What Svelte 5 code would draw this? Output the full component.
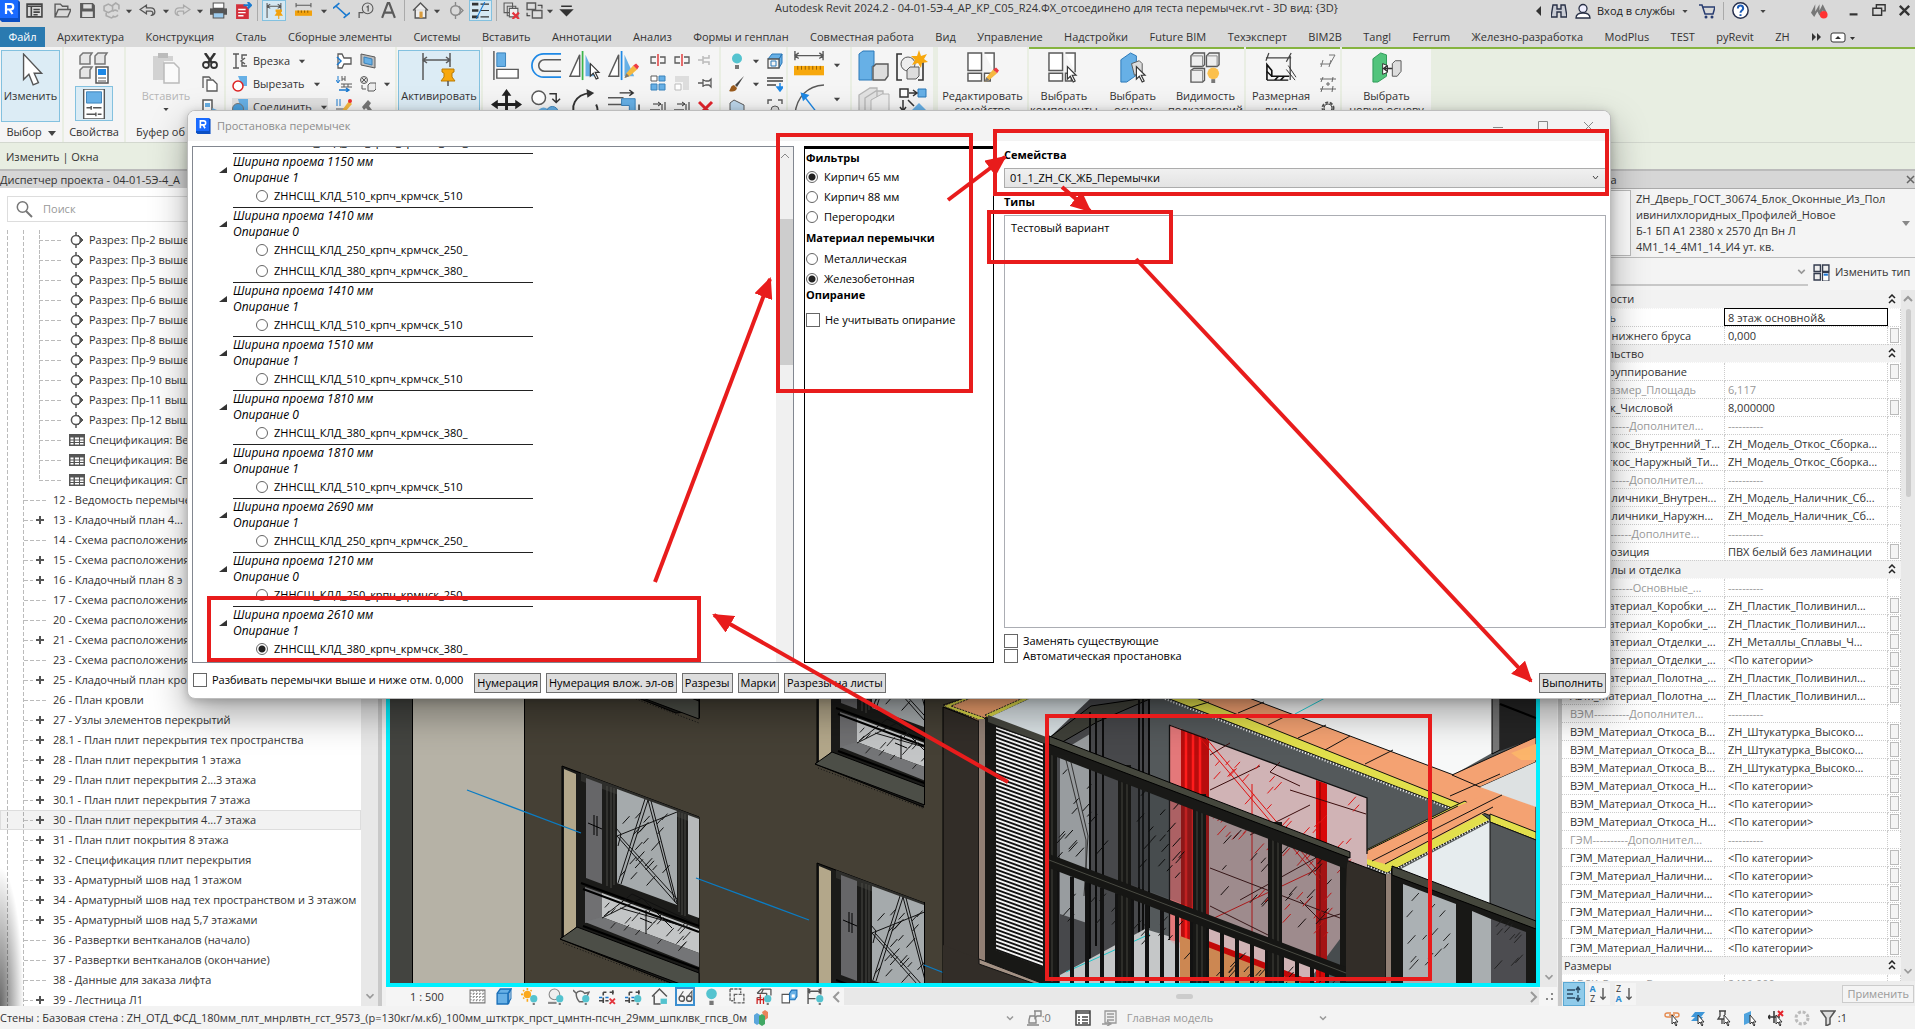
<script>
  const G = '#5a5a5a';
  const B = '#67b0e6';
  const bulb = '<circle cx="12" cy="10" r="3.4" fill="#54c3cf"/><path d="M11 14h2v2h-2z" fill="#777"/>';
  const cursor = (x, y) => `<path d="M${x} ${y}v13l3-3 3 6 2-1-3-6h4z" fill="#fff" stroke="#333" stroke-width="1.2"/>`;
  const pencil = (x, y) => `<g transform="translate(${x} ${y})"><path d="M0 14l2-5 7-8 4 4-8 7z" fill="#f5b840"/><path d="M9 1l4 4 2-3-3-3z" fill="#ee3a43"/><path d="M0 14l2-5 3 3z" fill="#777"/></g>`;
  const icons = {
    caret: `<path d="M4.500 6.500h7l-3.500 4z" fill="#444"/>`,
    caretGray: `<path d="M4 6l4 4 4-4" fill="none" stroke="#999" stroke-width="2"/>`,
    list: `<path d="M1 2h14v12H1z" fill="none" stroke="#444" stroke-width="1.5"/><path d="M1 4h14M5 4v10M7 7h6M7 9.500h6M7 12h4" stroke="#444" stroke-width="1.5"/>`,
    folder: `<path d="M1 14V2h5l2 2h5v3M1 14l3-7h12l-3 7z" fill="none" stroke="${G}" stroke-width="1.3"/>`,
    save: `<path d="M1 1h12l2 2v12H1z" fill="${G}"/><path d="M4 2h8v4H4zM3 9h10v5H3z" fill="#ddd"/>`,
    sync: `<path d="M1 4l4-2 4 2v4l-4 2-4-2zM8 4l4-3 3 2v4M3 10v3l5 2 2-1" fill="none" stroke="#aaa" stroke-width="1.5"/><path d="M9 9a3 3 0 015 0M14 12a3 3 0 01-5 1" fill="none" stroke="#aaa" stroke-width="1.500"/>`,
    undo: `<path d="M1 7l6-4v2.500h4c5 0 5 7 1 7 2-2 1-4-1-4H7V11z" fill="none" stroke="#555" stroke-width="1.2"/>`,
    redo: `<path d="M15 7L9 3v2.500H5c-5 0-5 7-1 7-2-2-1-4 1-4h4V11z" fill="none" stroke="#aaa" stroke-width="1.2"/>`,
    print: `<path d="M3 1h10v5H3z" fill="#fff" stroke="#555"/><path d="M0 6h16v6H0z" fill="#555"/><path d="M3 10h10v5H3z" fill="#9ccbee" stroke="#555"/>`,
    pdf: `<path d="M1 2h8l4 4v10H1z" fill="#d3303b"/><path d="M3 7h7M3 10h7M3 13h5" stroke="#fff" stroke-width="1.300"/><path d="M8 3h7M12 0l3 3-3 3" stroke="#1a7ad0" stroke-width="2" fill="none"/>`,
    dimpin: `<path d="M1 1v14M14 1v8M1 4h13M4 2L1 4l3 2M11 2l3 2-3 2" fill="none" stroke="${G}"/><path d="M9 7h6v2l-1 1 2 3H8l2-3-1-1zM11.500 13h1v3h-1z" fill="#f2a20d"/>`,
    measure: `<path d="M1 3h14M1 1v4M15 1v4" stroke="${G}"/><path d="M0 8h16v5H0z" fill="#f2a20d"/><path d="M3 8v2M6 8v2M9 8v2M12 8v2" stroke="#945f00"/>`,
    dim: `<path d="M3 4l10 9M0 6l6-5M10 15l6-5" stroke="#1a7ad0" stroke-width="1.500"/>`,
    tag: `<circle cx="10" cy="6" r="5" fill="none" stroke="${G}"/><path d="M6 10H2v5M9 5l1.500-1V9" fill="none" stroke="${G}" stroke-width="1.200"/>`,
    letter: `<path d="M2 15L7.300 1h1.400L14 15M4 10h8" fill="none" stroke="${G}" stroke-width="2"/>`,
    home: `<path d="M1 8l7-7 7 7M3 7v8h10V7" fill="#eee" stroke="#555" stroke-width="1.300"/><path d="M7 9h3v6H7z" fill="#d89b3c"/>`,
    section: `<circle cx="8" cy="8" r="4.500" fill="none" stroke="#888" stroke-width="1.400"/><path d="M8 0v3M8 13v3M11 4l4 4-4 4" fill="none" stroke="#888" stroke-width="1.300"/>`,
    thin: `<path d="M0 2h6M0 8h6M0 14h6" stroke="#333" stroke-width="2.500"/><path d="M8 2h8M8 8h8M8 14h8" stroke="#333"/><path d="M12 0L4 16" stroke="#1a7ad0"/>`,
    closewin: `<path d="M1 1h8v9H1zM4 4h8v9H4z" fill="#ddd" stroke="${G}"/><path d="M6 6h8v8H6z" fill="#eee" stroke="${G}"/><path d="M9 10l6 6M15 10l-6 6" stroke="#e3343c" stroke-width="2"/>`,
    switchwin: `<path d="M1 1h8v6H1zM6 8h9v7H6z" fill="#ddd" stroke="${G}" stroke-width="1.300"/><path d="M11 3h4v3M4 13H1v-3" stroke="#333" fill="none"/>`,
    more: `<path d="M3 4h10M3 7.500h10l-5 5z" stroke="#333" fill="#333" stroke-width="1.500"/>`,
    binoc: `<path d="M2 2h4v4h4V2h4l2 12h-6V9H6v5H0z" fill="#c9ccd4" stroke="#283046" stroke-width="1.400"/>`,
    person: `<circle cx="8" cy="5.500" r="4" fill="#eef" stroke="#283046" stroke-width="1.300"/><path d="M1 15c0-4 4-5 7-5s7 1 7 5z" fill="#fff" stroke="#283046" stroke-width="1.300"/>`,
    cart: `<path d="M0 2h3l3 9h8l2-7H4" fill="none" stroke="#283c70" stroke-width="1.500"/><circle cx="7" cy="14" r="1.500" fill="#283c70"/><circle cx="13" cy="14" r="1.500" fill="#283c70"/>`,
    help: `<circle cx="8" cy="8" r="7.200" fill="#fff" stroke="#27304d" stroke-width="1.400"/><path d="M5.500 6c0-3.500 5-3.500 5 0 0 2-2.500 2-2.500 4M8 11.500v1.700" fill="none" stroke="#1b5bb8" stroke-width="1.900"/>`,
    bim: `<path d="M0 10l4-8v7l4-7v6l3-6 4 8-4-2-3 5-2-4-3 5z" fill="#777"/><circle cx="12" cy="12" r="3.600" fill="#f33"/>`,
    min: `<path d="M3 13h9" stroke="#333" stroke-width="2.500"/>`,
    restore: `<path d="M5 5V2h10v7h-3M1 6h10v8H1z" fill="none" stroke="#333" stroke-width="1.600"/>`,
    close: `<path d="M3 3l10 10M13 3L3 13" stroke="#333" stroke-width="2.500"/>`,
    arrow32: `<path d="M9 1v24l5-5 4 10 5-2-4-9h7z" fill="#fff" stroke="#555" stroke-width="1.300"/>`,
    cubes: `<path d="M2 4l3-3h9l-2 3v8H2zM17 4l3-3h9l-2 3v8H17zM2 18l3-3h9l-2 3v8H2z" fill="#e6e6e6" stroke="#777" stroke-width="1.500"/><path d="M18 15h12v16H18z" fill="#fff" stroke="#555" stroke-width="1.500"/><path d="M20 17h8v6h-8z" fill="#1e88e5"/><path d="M20 26h8M20 29h8" stroke="#555"/>`,
    props: `<path d="M5 0h22v32H5z" fill="#fff" stroke="#555" stroke-width="1.500"/><path d="M8 3h16v12H8z" fill="${B}" stroke="#3a82ba"/><path d="M8 20h5M15 20h9M13 18v4M8 27h10M20 27h4M18 25v4" stroke="#555" stroke-width="1.500"/>`,
    paste: `<path d="M3 4h20v5h-9v19H3z" fill="#d2d2d2"/><path d="M8 1h10v5H8z" fill="#bbb"/><path d="M14 11h10l5 5v15H14z" fill="#fafafa" stroke="#bbb" stroke-width="1.500"/>`,
    scissors: `<path d="M3 0l7 10M13 0L6 10" stroke="#333" stroke-width="2.500"/><circle cx="4" cy="12" r="3" fill="none" stroke="#333" stroke-width="1.800"/><circle cx="12" cy="12" r="3" fill="none" stroke="#333" stroke-width="1.800"/>`,
    copy: `<path d="M1 12V1h6l2 2" fill="none" stroke="${G}" stroke-width="1.300"/><path d="M5 4h6l4 4v7H5z" fill="#fff" stroke="${G}" stroke-width="1.300"/>`,
    match: `<path d="M1 1h9v14H1z" fill="#fff" stroke="${G}" stroke-width="1.500"/><path d="M3 4h5v4H3z" fill="${B}"/><path d="M10 9l5 2-4 4z" fill="${B}"/>`,
    cope: `<path d="M1 1h6M4 1v14M1 15h6M15 2h-5v4M15 13h-5V9M13 5l-4 3 4 3" fill="none" stroke="${G}" stroke-width="1.400"/>`,
    cut: `<path d="M6 0h9v10h-5z" fill="${B}"/><circle cx="6" cy="10" r="5" fill="#fff" stroke="#d22" stroke-width="1.500"/>`,
    join: `<path d="M6 0h10v11H9z" fill="${B}"/><circle cx="6" cy="10" r="5.500" fill="#4ba0dd" stroke="#777"/>`,
    wallcut: `<path d="M2 1h4l2 4h7v6H8l-2 4H2z" fill="#fff" stroke="${G}" stroke-width="1.300"/><path d="M1 4l4 4-4 4" stroke="#1a7ad0" fill="none" stroke-width="1.500"/>`,
    face: `<path d="M1 1l14 3v11L1 12z" fill="#bbb" stroke="${G}"/><path d="M4 4l8 2v6l-8-2z" fill="${B}" stroke="#3a82ba"/>`,
    align2: `<path d="M2 0v6M0 4l2 3 2-3" stroke="#1a7ad0" fill="none"/><path d="M6 0v5M9 0v5M6 3h3M5 8h11M5 11h11M8 8v3M12 8v3" stroke="${G}" fill="none"/><path d="M3 14h9M10 12l3 2-3 2" stroke="#1a7ad0" fill="none" stroke-width="1.400"/>`,
    paint: `<circle cx="4" cy="4" r="3.500" fill="#ddd" stroke="${G}"/><path d="M2 2l4 4M6 2L2 6" stroke="${G}"/><path d="M8 9l2-2h6v6l-2 2H8z" fill="#eee" stroke="${G}"/><path d="M2 9v4h4" fill="none" stroke="${G}"/>`,
    wallpen: `<path d="M1 0v7M4 0v7" stroke="#1a7ad0"/><path d="M0 10h9M0 14h9" stroke="${G}"/><path d="M6 14l1-4 6-8 3 3-7 8z" fill="#f5b840"/><circle cx="14" cy="2" r="2" fill="#e33"/>`,
    hammer: `<path d="M2 8l6-7 3 3-2 3 6 8-3 1-6-7-2 2z" fill="#777"/>`,
    activate: `<path d="M1 0v27M28 0v14M1 7h27M5 4L1 7l4 3M24 4l4 3-4 3" fill="none" stroke="${G}" stroke-width="1.500"/><path d="M20 16h12v3l-2 1v4l3 4H19l3-4v-4l-2-1z" fill="#f7a80d" stroke="#b97b05"/><path d="M26 28v5" stroke="#555" stroke-width="1.500"/>`,
    align: `<path d="M3 1v30" stroke="${G}" stroke-width="1.500"/><path d="M6 3h9v14H6z" fill="${B}" stroke="#3a82ba"/><path d="M6 20h22v9H6z" fill="#fff" stroke="${G}" stroke-width="1.500"/>`,
    offset: `<path d="M32 4H14a12 12 0 000 24h18" fill="none" stroke="#1e88e5" stroke-width="1.800"/><path d="M32 10H15a6 6 0 000 12h17" fill="none" stroke="${G}" stroke-width="1.600"/>`,
    mirror: `<path d="M1 27L11 5v22z" fill="#fff" stroke="${G}" stroke-width="1.500"/><path d="M14 1v30" stroke="#3bb54a" stroke-width="1.800"/><path d="M17 5l10 22H17z" fill="${B}"/>${cursor(22, 14)}`,
    mirror2: `<path d="M1 27L11 5v22z" fill="#fff" stroke="${G}" stroke-width="1.500"/><path d="M14 1v30" stroke="#1e88e5" stroke-width="1.800"/><path d="M17 5l10 22H17z" fill="${B}"/>${pencil(17, 15)}`,
    move: `<path d="M16 2v28M2 16h28" stroke="#222" stroke-width="3"/><path d="M16 0l5 7H11zM16 32l5-7H11zM0 16l7-5v10zM32 16l-7-5v10z" fill="#222"/>`,
    copyo: `<circle cx="9" cy="9" r="7" fill="#fff" stroke="${G}" stroke-width="1.500"/><circle cx="14" cy="25" r="6" fill="${B}"/><circle cx="23" cy="24" r="6" fill="${B}" stroke="#3a82ba"/><path d="M20 5h7v8M23 10l4 4 4-4" stroke="#333" fill="none" stroke-width="1.500"/>`,
    rotate: `<path d="M8 30C0 18 6 6 22 4M28 30c2-5 2-10 0-14" fill="none" stroke="#333" stroke-width="2"/><path d="M18 0l8 4-7 5z" fill="#333"/>`,
    trim: `<path d="M0 9h16M0 16h16" stroke="${G}" stroke-width="1.500"/><path d="M14 10h14v20h-6V17h-8z" fill="${B}" stroke="#3a82ba"/><path d="M12 4h14M22 1l4 3-4 3M32 30V16" stroke="#333" fill="none" stroke-width="1.500"/>`,
    split: `<path d="M6 5H1v6h5M10 5h5v6h-5" fill="none" stroke="${G}" stroke-width="1.300"/><path d="M8 2v12" stroke="#d22" stroke-width="1.300"/>`,
    unpin: `<path d="M0 8h5M5 4v8M5 6h6V3M5 10h6v3" fill="none" stroke="#bbb" stroke-width="1.500"/>`,
    array: `<path d="M1 1h6v5H1z" fill="#fff" stroke="${G}"/><path d="M9 1h6v5H9zM1 9h6v6H1zM9 9h6v6H9z" fill="${B}" stroke="#3a82ba"/>`,
    scale: `<path d="M1 1h14v14H9V7H1z" fill="#ddd"/><path d="M1 9h6v6H1z" fill="#fff" stroke="#bbb"/>`,
    pin: `<path d="M0 8h5M5 4v8M5 5l3 1h3l2-2v8l-2-2H8l-3 1" fill="none" stroke="${G}" stroke-width="1.300"/>`,
    trim2: `<path d="M0 12h10M0 16h10M12 6v10M15 4v12" stroke="${G}" stroke-width="1.300"/><path d="M3 6h7M8 4l3 2-3 2" fill="none" stroke="#333"/>`,
    del: `<path d="M1 4l12 12M14 4L2 16" stroke="#e3242c" stroke-width="3"/>`,
    bulbs: `<circle cx="8" cy="5.500" r="5" fill="#54c3cf"/><path d="M6 12h4v4H6z" fill="#777"/>`,
    brush: `<path d="M15 0L6 9l2 2z" fill="#444"/><path d="M0 15c2-2 1-5 5-6l3 3c-1 4-5 4-8 3z" fill="#9a5b1d"/>`,
    blue3d: `<path d="M1 6l4-5h10l-3 5zM12 6l3-5v9l-3 5z" fill="${B}" stroke="#2a78b8"/><path d="M1 6h11v9H1z" fill="#f4f4f4" stroke="#555" stroke-width="1.300"/><path d="M4 8h5v5H4z" fill="none" stroke="#2a78b8"/>`,
    lines: `<path d="M0 2h16M0 5h16M0 9h9" stroke="#444" stroke-width="1.500"/><path d="M13 7v6M10 11l3 4 3-4z" stroke="#1e88e5" fill="#1e88e5" stroke-width="1.500"/>`,
    glassbox: `<path d="M1 4l4-3 10 5v9l-5 1-9-5z" fill="#bcd6ea" stroke="${G}"/>`,
    focus: `<path d="M1 5V1h4M11 1h4v4" fill="none" stroke="${G}" stroke-width="1.400"/><circle cx="8" cy="11" r="4" fill="#ddd" stroke="${G}"/>`,
    measureL: `<path d="M1 6h30M1 1v10M31 1v10M5 3L1 6l4 3M27 3l4 3-4 3" fill="none" stroke="${G}" stroke-width="1.500"/><path d="M0 17h32v10H0z" fill="#f7a80d"/><path d="M4 17v4M8 17v4M12 17v4M16 17v4M20 17v4M24 17v4M28 17v4" stroke="#945f00"/>`,
    arc: `<path d="M1 32C3 14 14 2 32 1" fill="none" stroke="${G}" stroke-width="1.500"/><path d="M10 12l14 18M8 10l7 2-5 5z" stroke="#1e88e5" fill="#1e88e5" stroke-width="1.500"/>`,
    model: `<path d="M1 4l4-3h11v15h-2v14H1z" fill="${B}" stroke="#2a78b8"/><path d="M15 17l3-3h12v12l-3 4H15z" fill="#ddd" stroke="${G}" stroke-width="1.400"/>`,
    group: `<path d="M6 4H1v26h5M27 12v18h-5" fill="none" stroke="#333" stroke-width="1.600"/><circle cx="12" cy="14" r="7" fill="#eee" stroke="${G}"/><path d="M11 20l3-3h9v9l-3 3h-9z" fill="#ddd" stroke="${G}"/><path d="M23 0l2 6 6-2-3 5 4 3-6 1-1 5-3-5-6 2 3-5-4-4 6 0z" fill="#f7a80d"/>`,
    sheets: `<path d="M1 9L12 2h7v18L8 28H1zM7 12l11-7h7v18L14 30H7z" fill="#e2e2e2" stroke="#b5b5b5" stroke-width="1.300"/><path d="M13 14l11-6h7v18l-10 6h-8z" fill="#eee" stroke="#b5b5b5"/>`,
    assemble: `<path d="M4 3h8v8H4z" fill="#fff" stroke="#333" stroke-width="1.500"/><path d="M22 3h8v8h-8z" fill="${B}" stroke="#2a78b8"/><path d="M13 7h7M17 4l4 3-4 3M7 14v10M4 21l3 4 3-4M12 14l6 6" fill="none" stroke="#333" stroke-width="1.500"/><path d="M14 26l9-9 9 9-9 6z" fill="${B}"/>`,
    editfam: `<path d="M1 1h14v18H1zM18 1h10v20M1 22h14v8H1zM18 22h6v8h-6z" fill="#fff" stroke="${G}" stroke-width="1.500"/>${pencil(18, 17)}`,
    pickcomp: `<path d="M1 1h14v18H1zM18 1h10v20M1 22h14v8H1zM18 22h6v8h-6z" fill="#fff" stroke="${G}" stroke-width="1.500"/>${cursor(20, 15)}`,
    pickbase: `<path d="M4 8L14 1l6 3v20L10 31H4z" fill="${B}" stroke="#2a78b8"/><path d="M15 12l8-3 3 3v9l-8 3z" fill="#ddd" stroke="${G}"/>${cursor(20, 15)}`,
    subcat: `<path d="M2 4l3-3h11v12l-2 2H2zM18 4l3-3h10v12l-2 2H18zM2 19l3-2h11v12l-2 2H2z" fill="#eee" stroke="${G}" stroke-width="1.400"/><path d="M2 4h12v11M18 4h11v11M2 19h12v11" fill="none" stroke="#888"/><circle cx="25" cy="22" r="6" fill="#fbc04d"/><path d="M23 28h4v4h-4z" fill="#777"/>`,
    dimline: `<path d="M1 6h26M4 1L1 9M27 1l-5 9M26 4v25" stroke="#444" fill="none" stroke-width="1.300"/><path d="M2 29V13l5 6v6h18" fill="none" stroke="#111" stroke-width="1.700"/><path d="M2 29h22M10 29l4-4M16 29l4-4M2 20l5 5" fill="none" stroke="#111" stroke-width="1.500"/><path d="M22 18l9 11M24 14l8 12" stroke="#333"/>`,
    tool1: `<path d="M0 11h10l5-9h-6M3 7l-2 7M11 7l-2 7" fill="none" stroke="#777"/>`,
    tool2: `<path d="M0 3h16M0 13h16M3 1L1 6M13 1l-1 5M3 10l-2 6M13 10l-1 6M6 8h4M8 6v4" stroke="#666" fill="none"/>`,
    gear: `<circle cx="8" cy="9" r="5.500" fill="#fff" stroke="#555" stroke-width="2" stroke-dasharray="3 1.500"/><circle cx="8" cy="9" r="4" fill="none" stroke="#555"/>`,
    newbase: `<path d="M2 7l8-6 6 2v22l-9 6H2z" fill="#52c47c" stroke="#2d9a57"/><path d="M12 12l5 2v7l-5 2z" fill="#fff" stroke="#333"/><path d="M13 17h11M17 14l-4 3 4 3" stroke="#333" fill="none" stroke-width="1.500"/><path d="M22 12l3-3h6v11l-4 5h-5z" fill="#ddd" stroke="${G}"/>`,
    revit: `<path d="M0 0h18l2 2v20H2l-2-2z" fill="#0b4fc4"/><path d="M0 0h18v18H0z" fill="#1a6bff"/><path d="M6 14V4h4.500a2.700 2.700 0 010 5.500H6M9.500 9.500l3 4.500" fill="none" stroke="#fff" stroke-width="2.200"/>`,
    sheet: `<path d="M0 2h16v12H0z" fill="#555"/><path d="M1.500 5.500h3v2h-3zM6 5.500h4v2H6zM11 5.500h3.500v2H11zM1.500 8.500h3v1.500h-3zM6 8.500h4v1.500H6zM11 8.500h3.500v1.500H11zM1.500 11h3v1.500h-3zM6 11h4v1.500H6zM11 11h3.500v1.500H11z" fill="#fff"/>`,
    mark: `<circle cx="7" cy="8" r="4.600" fill="none" stroke="#555" stroke-width="1.500"/><path d="M7 0v4M7 12v4" stroke="#555" stroke-width="1.500"/><path d="M9 3l5 5-5 5c3-3 3-7 0-10z" fill="#555" stroke="#555"/>`,
    hatch: `<path d="M1 2h14v12H1z" fill="#fff" stroke="#777"/><path d="M1 5h14M1 8h14M1 11h14M4 2v12M7 2v12M10 2v12M13 2v12" stroke="#888" stroke-dasharray="1.500 1.500"/>`,
    cube: `<path d="M2 5l3-4h10l-2 4v9l-1 1H2z" fill="${B}" stroke="#1a6fb8" stroke-width="1.300"/><path d="M2 5h10v10M12 5l3-4v9l-3 5" fill="none" stroke="#1a6fb8"/>`,
    sun: `<circle cx="6" cy="6" r="3.500" fill="#fba81c"/><path d="M6 0v2M6 10v3M0 6h2M2 2l1 1M10 2l-1 1M2 10l1-1" stroke="#fba81c" stroke-width="1.500"/>${bulb}`,
    shadow: `<circle cx="7" cy="6" r="5" fill="#eee" stroke="#888"/><path d="M1 14h8" stroke="#888" stroke-width="2"/>${bulb}`,
    teapot: `<path d="M0 2l3 3c0 4 1 6 3 8h4M3 5c2-3 6-3 8 0l4-1-2 4" fill="none" stroke="#666" stroke-width="1.400"/>${bulb}`,
    crop: `<path d="M4 9v5M4 12H0M6 12h3M4 4v3M4 4h3M10 4h4M13 2v4" fill="none" stroke="#444" stroke-width="1.500"/><path d="M0 9h3M6 9h3" stroke="#1a7ad0" stroke-width="1.500"/><path d="M10 10l5 5M15 10l-5 5" stroke="#e3343c" stroke-width="1.800"/>`,
    crop2: `<path d="M4 9v5M4 12H0M6 12h3M4 4v3M4 4h3M10 4h4M13 2v4" fill="none" stroke="#444" stroke-width="1.500"/><path d="M0 9h3M6 9h3" stroke="#1a7ad0" stroke-width="1.500"/>${bulb}`,
    lock: `<path d="M1 8l7-7 7 7M3 7v8h6" fill="none" stroke="#555" stroke-width="1.400"/><path d="M9 10h6v5H9z" fill="#54c3cf"/>`,
    glasses: `<circle cx="4.500" cy="10" r="2.500" fill="none" stroke="#555" stroke-width="1.300"/><circle cx="11.500" cy="10" r="2.500" fill="none" stroke="#555" stroke-width="1.300"/><path d="M2 9l4-6M14 9V3l-4 5" fill="none" stroke="#555"/>`,
    props2: `<path d="M1 1h10v4M1 1v11h3M5 6h9v8H5z" fill="none" stroke="#666" stroke-width="1.300" stroke-dasharray="3 1"/>`,
    grid3: `<path d="M2 5l4-4h9M2 5h9M15 1v6M2 9h4M11 5v3M8 1l-2 4" fill="none" stroke="#555" stroke-width="1.200"/><path d="M2 15V9M5 15V6M8 15V9M2 11h7" stroke="#c22" stroke-width="1.200"/>${bulb}`,
    small3: `<path d="M1 6h7v8H1z" fill="#fff" stroke="#555"/><path d="M8 5l2-3h5v6l-2 3H8z" fill="${B}" stroke="#1a6fb8"/><path d="M10 6h3v3h-3z" fill="#fff"/>`,
    constr: `<path d="M1 0v15M1 3h12M13 0v6M1 10h7M3 1L1 3l2 2M11 1l2 2-2 2" fill="none" stroke="#555" stroke-width="1.300"/>${bulb}`,
    work: `<path d="M1 5l3-2 3 2v8l-3 2-3-2z" fill="#5ba6dc"/><path d="M9 2l3-2 3 2v6l-3 2z" fill="#e9835a"/><path d="M6 6l3-2 3 2v8l-3 2-3-2z" fill="#41a864"/>`,
    editreq: `<path d="M8 1h7v5h-4l-2 2V1M4 6h5l1 4v3H3v-3zM1 15h12" fill="none" stroke="#888" stroke-width="1.400"/>`,
    dlist: `<path d="M1 1h14v14H1z" fill="#fff" stroke="#444" stroke-width="1.500"/><path d="M1 3h14M3 7h2M7 7h6M3 10h2M7 10h6M3 13h2M7 13h6" stroke="#444" stroke-width="1.500"/>`,
    dlist2: `<path d="M4 1h11v12H4z" fill="#eee" stroke="#999" stroke-width="1.300"/><path d="M6 4h7M6 7h7M6 10h7M1 14h8M6 11l4 3-4 2" stroke="#999" stroke-width="1.300" fill="none"/>`,
    s1: `<path d="M7 3H3a2 2 0 000 4h4M9 3h4a2 2 0 010 4h-2M5 5h6" fill="none" stroke="#e58a4e" stroke-width="1.400"/><path d="M8 5v9l2-2 2 4 1-1-2-3h3z" fill="#fff" stroke="#333"/>`,
    s2: `<path d="M5 2h10l-4 5H1zM5 7h8l-3 4H1z" fill="#3f97d8"/><path d="M8 5v9l2-2 2 4 1-1-2-3h3z" fill="#fff" stroke="#333"/>`,
    s3: `<path d="M3 1h7M4 1v5l-2 3h8M9 1v4M6 9v5" fill="none" stroke="#444" stroke-width="1.300"/><path d="M8 5v9l2-2 2 4 1-1-2-3h3z" fill="#fff" stroke="#333"/>`,
    s4: `<path d="M2 4l7-3v11l-7 3z" fill="#4fa3de"/><path d="M8 5v9l2-2 2 4 1-1-2-3h3z" fill="#fff" stroke="#333"/>`,
    s5: `<path d="M0 7h12M6 1v12M2 5L0 7l2 2" fill="none" stroke="#333" stroke-width="1.500"/><path d="M10 1l5 5M15 1l-5 5" stroke="#e3242c" stroke-width="2"/><path d="M8 5v9l2-2 2 4 1-1-2-3h3z" fill="#fff" stroke="#333"/>`,
    s6: `<circle cx="8" cy="8" r="6" fill="none" stroke="#bbb" stroke-width="3" stroke-dasharray="3 1.700"/>`,
    filter: `<path d="M1 1h14l-5 7v6l-4 2V8z" fill="#ddd" stroke="#555" stroke-width="1.500"/>`,
    type: `<path d="M1 1h6v6H1zM9 1h6v6H9zM1 9h6v6H1z" fill="#eee" stroke="#333b4d" stroke-width="1.300"/><path d="M9 8h6v8H9z" fill="#fff" stroke="#333b4d"/><path d="M10 9h4v2h-4z" fill="#1e78d5"/>`,
    sort: `<path d="M1 4h8M1 8h6M1 12h8M12 2v5M12 9v5M10 4l2-3 2 3M10 12l2 3 2-3" fill="none" stroke="#2b4a63" stroke-width="1.400"/>`,
    down: `<path d="M8 1v13M5 11l3 3 3-3" fill="none" stroke="#555" stroke-width="1.600"/>`,
    search: `<circle cx="6.500" cy="6" r="5.200" fill="none" stroke="#777" stroke-width="1.500"/><path d="M10 10l6 6" stroke="#777" stroke-width="2"/>`
  };

  const qat = [
    ['list', 25], ['folder', 30], ['save', 20], ['sync', 28], ['caret', 7], ['undo', 30], ['caret', 7],
    ['redo', 27], ['caret', 7], ['print', 30], ['pdf', 20], ['|', 9], ['dimpin', 24, 1], ['measure', 34], ['caret', 7],
    ['dim', 28], ['tag', 20], ['letter', 26], ['|', 6], ['home', 26], ['caret', 8], ['section', 28],
    ['thin', 23, 1], ['|', 8], ['closewin', 22], ['switchwin', 24], ['caret', 8], ['more', 24]
  ];
  const tabs = ['Архитектура', 'Конструкция', 'Сталь', 'Сборные элементы', 'Системы', 'Вставить', 'Аннотации', 'Анализ', 'Формы и генплан', 'Совместная работа', 'Вид', 'Управление', 'Надстройки', 'Future BIM', 'Техэксперт', 'BIM2B', 'Tangl', 'Ferrum', 'Железно-разработка', 'ModPlus', 'TEST', 'pyRevit', 'ZH'];

  const tree = [
    ...[2, 3, 5, 6, 7, 8, 9, 10, 11, 12].map((n) => ({ k: 'mark', t: `Разрез: Пр-${n} выше` })),
    { k: 'sheet', t: 'Спецификация: Ве' },
    { k: 'sheet', t: 'Спецификация: Ве' },
    { k: 'sheet', t: 'Спецификация: Сп', end: true },
    ...[
      '12 - Ведомость перемычек', '+13 - Кладочный план 4...', '14 - Схема расположения', '+15 - Схема расположения',
      '+16 - Кладочный план 8 э', '17 - Схема расположения', '20 - Схема расположения', '+21 - Схема расположения',
      '23 - Схема расположения', '+25 - Кладочный план кро', '26 - План кровли', '+27 - Узлы элементов перекрытий',
      '+28.1 - План плит перекрытия тех пространства', '+28 - План плит перекрытия 1 этажа', '+29 - План плит перекрытия 2...3 этажа',
      '+30.1 - План плит перекрытия 7 этажа', '+30 - План плит перекрытия 4...7 этажа', '+31 - План плит покрытия 8 этажа',
      '+32 - Спецификация плит перекрытия', '+33 - Арматурный шов над 1 этажом', '+34 - Арматурный шов над тех пространством и 3 этажом',
      '+35 - Арматурный шов над 5,7 этажами', '36 - Развертки вентканалов (начало)', '37 - Развертки вентканалов (окончание)',
      '38 - Данные для заказа лифта', '+39 - Лестница Л1'
    ].map((s) => ({ k: 'row', plus: s[0] === '+', t: s.replace('+', ''), sel: s.startsWith('+30 ') }))
  ];

  const openings = [
    [1150, 1, ['510_крпч_крмчск_510']], [1410, 0, ['250_крпч_крмчск_250_', '380_крпч_крмчск_380_']],
    [1410, 1, ['510_крпч_крмчск_510']], [1510, 1, ['510_крпч_крмчск_510']], [1810, 0, ['380_крпч_крмчск_380_']],
    [1810, 1, ['510_крпч_крмчск_510']], [2690, 1, ['250_крпч_крмчск_250_']], [1210, 0, ['250_крпч_крмчск_250_']],
    [2610, 1, ['380_крпч_крмчск_380_']]
  ];

  const d = '----------';
  const cat = '<По категории>';
  const props = [
    ['#', 'Зависимости'], ['Уровень', '8 этаж основной&', 'edit'], ['Высота нижнего бруса', '0,000', 'b'],
    ['#', 'Строительство'], ['ADSK_Группирование', '', 'b'], ['ADSK_Размер_Площадь', '6,117', 'g'],
    ['ZH_Этаж_Числовой', '8,000000', 'b'], ['АЭМ----------Дополнител...', d, 'g'],
    ['ВЭМ_Откос_Внутренний_Т...', 'ZH_Модель_Откос_Сборка...'], ['ВЭМ_Откос_Наружный_Ти...', 'ZH_Модель_Откос_Сборка...'],
    ['ВЭМ----------Дополнител...', d, 'g'], ['ГЭМ_Наличники_Внутрен...', 'ZH_Модель_Наличник_Сб...'],
    ['ГЭМ_Наличники_Наружн...', 'ZH_Модель_Наличник_Сб...'], ['ГЭМ-----------Дополните...', d, 'g'],
    ['ADSK_Позиция', 'ПВХ белый без ламинации', 'b'], ['#', 'Материалы и отделка'],
    ['АЭМ-----------Основные_...', d, 'g'],
    ['АЭМ_Материал_Коробки_...', 'ZH_Пластик_Поливинил...', 'b'], ['АЭМ_Материал_Коробки_...', 'ZH_Пластик_Поливинил...', 'b'],
    ['АЭМ_Материал_Отделки_...', 'ZH_Металлы_Сплавы_Ч...', 'b'], ['АЭМ_Материал_Отделки_...', cat, 'b'],
    ['АЭМ_Материал_Полотна_...', 'ZH_Пластик_Поливинил...', 'b'], ['АЭМ_Материал_Полотна_...', 'ZH_Пластик_Поливинил...', 'b'],
    ['ВЭМ----------Дополнител...', d, 'g'],
    ...Array(3).fill(['ВЭМ_Материал_Откоса_В...', 'ZH_Штукатурка_Высоко...', 'b']),
    ...Array(3).fill(['ВЭМ_Материал_Откоса_Н...', cat, 'b']),
    ['ГЭМ----------Дополнител...', d, 'g'],
    ...Array(6).fill(['ГЭМ_Материал_Налични...', cat, 'b']),
    ['#', 'Размеры'], ['ADSK_Размер_Высота', '2400,000', 'g']
  ];

  const viewIcons = ['hatch', 'cube', 'sun', 'shadow', 'teapot', 'crop', 'crop2', 'lock', 'glasses', 'bulbs', 'props2', 'grid3', 'small3', 'constr'];

  let seed = 7;
  const rnd = () => (seed = (seed * 16807) % 2147483647) / 2147483647;
  // short diagonal glass strokes scattered inside a skewed pane
  function glints(x0, x1, y0, y1, slope, n) {
    let p = '';
    for (let i = 0; i < n; i++) {
      const x = x0 + rnd() * (x1 - x0 - 8);
      const y = y0 + 8 + (x - x0) * slope + rnd() * (y1 - y0 - 10);
      const l = 4 + rnd() * 5;
      p += `M${x.toFixed(1)} ${y.toFixed(1)}l${l.toFixed(1)} ${(-l * 1.1).toFixed(1)}`;
    }
    return p;
  }
  const glA = glints(620, 674, 792, 885, 0.37, 22);
  const glA2 = glints(604, 696, 893, 928, 0.37, 20);
  const glRed = glints(1210, 1362, 744, 840, 0.37, 44);
  const glDark = glints(1208, 1338, 800, 900, 0.37, 26);
  const glRed2 = glints(1208, 1338, 800, 900, 0.37, 26);
  const glLeft = glints(1057, 1112, 758, 860, 0.37, 16) + glints(1131, 1190, 782, 880, 0.37, 18);
  const glLow = glints(1057, 1340, 875, 920, 0.37, 44);
  const glRight = glints(1403, 1452, 885, 975, 0.3, 14) + glints(1494, 1526, 915, 975, 0.3, 10);
  const balusters = Array.from({ length: 19 }, (_, i) => 1057 + i * 15);
</script>

{#snippet icon(name, size = 16, box = 16)}
  <svg width={size} height={size} viewBox="0 0 {box} {box}" aria-hidden="true">{@html icons[name]}</svg>
{/snippet}

{#snippet big(name, a, b)}
  <button class="big">{@render icon(name, 32, 33)}<span>{a}<br />{b}</span></button>
{/snippet}

<div class="app">
  <header class="top">
    <button class="logo" aria-label="Revit">{@render icon('revit', 22, 22)}</button>
    <div class="qat">
      {#each qat as [name, w, on]}
        {#if name === '|'}
          <i class="sep" style="width:{w}px"></i>
        {:else}
          <button class:on aria-label={name} style="width:{w}px">{@render icon(name, name === 'caret' ? 14 : 17)}</button>
        {/if}
      {/each}
    </div>
    <h1>Autodesk Revit 2024.2 - 04-01-5Э-4_АР_КР_С05_R24.ФХ_отсоединено для теста перемычек.rvt - 3D вид: {'{3D}'}</h1>
    <div class="account">
      <svg width="8" height="10" viewBox="0 0 8 10"><path d="M6 0v10L1 5z" fill="#333" /></svg>
      {@render icon('binoc')}
      {@render icon('person')}
      <a href="#login">Вход в службы</a>
      {@render icon('caret', 12)}
      {@render icon('cart')}
      <i></i>
      {@render icon('help', 17)}
      {@render icon('caret', 12)}
    </div>
    <div class="winbtns">
      <button aria-label="BIM">{@render icon('bim', 17)}</button>
      <button aria-label="Свернуть">{@render icon('min', 14)}</button>
      <button aria-label="Восстановить">{@render icon('restore', 14)}</button>
      <button aria-label="Закрыть">{@render icon('close', 15)}</button>
    </div>
  </header>

  <nav class="tabs">
    <a class="file" href="#file">Файл</a>
    <div class="tablist">
      {#each tabs as t}<a href="#tab">{t}</a>{/each}
      <svg class="ff" width="46" height="12" viewBox="0 0 46 12"><path d="M1 2l4 4-4 4zM6 2l4 4-4 4z" fill="#333" /><rect x="20" y="2" width="14" height="9" rx="2" fill="#fff" stroke="#333" /><path d="M24 8h6l-3-3zM39 6h5l-2.500 3z" fill="#333" /></svg>
    </div>
  </nav>

  <div class="ribbon">
    <section class="g g1"><button class="hl tall">{@render icon('arrow32', 34, 32)}<span>Изменить</span></button><footer>Выбор&nbsp; <b class="tri"></b></footer></section>
    <section class="g g2"><button aria-label="Типоразмеры">{@render icon('cubes', 32, 32)}</button><button class="hl" aria-label="Свойства">{@render icon('props', 30, 32)}</button><footer>Свойства</footer></section>
    <section class="g g3">
      <div class="row">
        <button class="big off">{@render icon('paste', 32, 32)}<span>Вставить</span>{@render icon('caret', 12)}</button>
        <div class="col">{@render icon('scissors')}{@render icon('copy')}{@render icon('match')}</div>
      </div>
      <footer>Буфер об</footer>
    </section>
    <section class="g g4 row">
      <div class="col wide">
        <button>{@render icon('cope')}Врезка {@render icon('caret', 14)}</button>
        <button>{@render icon('cut')}Вырезать {@render icon('caret', 14)}</button>
        <button class="pressed">{@render icon('join')}Соединить {@render icon('caret', 14)}</button>
      </div>
      <div class="col">{@render icon('wallcut')}{@render icon('align2')}{@render icon('wallpen')}</div>
      <div class="col">{@render icon('face')}{@render icon('paint')}{@render icon('hammer')}</div>
      <div class="col carets"><span></span>{@render icon('caret', 14)}<span></span></div>
    </section>
    <section class="g g5"><button class="hl tall act">{@render icon('activate', 34, 34)}<span>Активировать</span></button></section>
    <section class="g g6 row">
      <div class="quad">
        {#each ['align', 'offset', 'mirror', 'mirror2', 'move', 'copyo', 'rotate', 'trim'] as n}{@render icon(n, 32, 33)}{/each}
      </div>
      <div class="col">{@render icon('split')}{@render icon('array')}{@render icon('trim2')}</div>
      <div class="col">{@render icon('split')}{@render icon('scale')}{@render icon('trim2')}</div>
      <div class="col">{@render icon('unpin')}{@render icon('pin')}{@render icon('del')}</div>
    </section>
    <section class="g g7 row">
      <div class="col">{@render icon('bulbs')}{@render icon('brush')}{@render icon('glassbox')}</div>
      <div class="col carets">{@render icon('caret', 14)}{@render icon('caret', 14)}<span></span></div>
      <div class="col">{@render icon('blue3d')}{@render icon('lines')}{@render icon('focus')}</div>
    </section>
    <section class="g g8 duo">{@render icon('measureL', 30, 32)}{@render icon('caret', 14)}{@render icon('arc', 30, 32)}{@render icon('caret', 14)}</section>
    <section class="g g9 duo">{@render icon('model', 32, 32)}{@render icon('group', 32, 32)}{@render icon('sheets', 32, 32)}{@render icon('assemble', 32, 32)}</section>
    <section class="g g10">{@render big('editfam', 'Редактировать', 'семейство')}</section>
    <section class="g g11 row green">{@render big('pickcomp', 'Выбрать', 'компоненты')}{@render big('pickbase', 'Выбрать', 'основу')}{@render big('subcat', 'Видимость', 'подкатегорий')}</section>
    <section class="g g12 row green">{@render big('dimline', 'Размерная', 'линия')}<div class="col">{@render icon('tool1')}{@render icon('tool2')}{@render icon('gear')}</div></section>
    <section class="g g13 green">{@render big('newbase', 'Выбрать', 'новую основу')}</section>
    <div class="rest green"></div>
  </div>

  <div class="options">Изменить | Окна</div>

  <main class="work">
    <aside class="browser">
      <h2>Диспетчер проекта - 04-01-5Э-4_А</h2>
      <label class="search">{@render icon('search', 17, 17)}<input placeholder="Поиск" aria-label="Поиск" /></label>
      <div class="treewrap">
        <ul class="ptree">
          {#each tree as r}
            <li class={r.k} class:deep={r.k !== 'row'} class:end={r.end} class:sel={r.sel}>
              {#if r.k === 'row'}
                <i class="dash" class:short={r.plus}></i><b>{#if r.plus}<svg width="8" height="8" viewBox="0 0 8 8"><path d="M4 0v8M0 4h8" stroke="#555" stroke-width="2" /></svg>{/if}</b>
              {:else}
                <i class="dash"></i>{@render icon(r.k, 16)}
              {/if}
              <span>{r.t}</span>
            </li>
          {/each}
        </ul>
        <div class="vscroll">{@render icon('caretGray', 14)}</div>
      </div>
    </aside>

    <section class="view">
      <div class="stage">
        <div class="canvas">
          <svg viewBox="390 174 1146 809" preserveAspectRatio="xMidYMax slice" role="img" aria-label="3D вид здания">
            <defs>
              <pattern id="louver" width="8" height="4" patternUnits="userSpaceOnUse" patternTransform="skewY(20)"><rect width="8" height="4" fill="#111" /><rect width="8" height="2" fill="#f2f2f2" /></pattern>
              <clipPath id="narrow"><rect x="500" y="400" width="169" height="800" /></clipPath>
              <g id="win">
                <path d="M562 766l137 51v166l-23 2-116-46 2-2z" fill="#1b1b19" stroke="#000" />
                <path d="M564 769l12 5v153l-12 11z" fill="#b3a78a" />
                <path d="M560 939l17-12 122 46v18z" fill="#4c4e47" stroke="#000" />
                <path d="M563 943l136 52" stroke="#111" stroke-dasharray="1 2" />
                <path d="M581 773l118 44v8l-118-44z" fill="#2e2e2b" />
                <path d="M586 778l16 6v100l-16-6z" fill="#666668" />
                <path d="M617 789l60 22v94l-60-22z" fill="#a5aaac" />
                <path d="M688 815l11 4v99l-11-4z" fill="#b6b9ba" />
                <path d="M585 887l17 6v25l-17 5z" fill="#707072" />
                <path d="M602 893l97 36v24l-97-36z" fill="#c3c5c6" />
                <path d="M585 922l17-5 97 36v14z" fill="#747577" />
                <path d="M607 786v100M611 787v101M614 788v97M679 812v100M682 813v102M685 814v102" stroke="#4a4a47" />
                <path d="M581 883l118 43M583 889l116 43M583 926l116 43" stroke="#000" stroke-width="2" />
                <path d="M618 883l27-84M621 884l27-84M648 800l27 102M651 801l26 102M617 836l60-24M617 836l60 68M620 836l58 64" fill="none" stroke="#111" stroke-width="1" />
                <path d="M616 828l5 6-3 12M604 916l28-22 60 28M620 908l70 20M602 918l40-20 30 30" fill="none" stroke="#111" />
                <path d="M588 823l14 6M594 815v20M597 816v20M640 918l12 5M646 910v24" stroke="#000" />
                <path d={glA} stroke="#111" /><path d={glA2} stroke="#222" />
              </g>
            </defs>
            <rect x="390" y="0" width="1146" height="983" fill="#454035" />
            <rect x="390" y="0" width="23" height="983" fill="#434440" />
            <rect x="413" y="0" width="111" height="983" fill="#b6b2a6" />
            <path d="M412.500 187v796M524.500 187v796" stroke="#000" />
            <use href="#win" /><use href="#win" y="-272" />
            <g transform="translate(255 97)"><g clip-path="url(#narrow)"><use href="#win" /><use href="#win" y="-272" /></g></g>
            <path d="M924.500 700v105M924.500 902v81M699.500 698v20" stroke="#000" />
            <path d="M467 790l114 43M696 878l113 42M924 965l46 18" stroke="#0a7cc4" stroke-width="1.300" />

            <path d="M943 707l36 14v262h-36z" fill="#322d28" stroke="#000" />
            <path d="M943 705l22-7h64l-44 20-7 3z" fill="#efa06e" stroke="#111" />
            <path d="M943 706l22-8h6l-20 8 34 12-3 3zM985 715l38-17h8l-42 20z" fill="#dcd94a" stroke="#222" stroke-dasharray="2 1" />
            <rect x="1040" y="698" width="496" height="285" fill="#54595b" />
            <path d="M990 717l41-19h60v8l-42 34z" fill="#dbe3e6" />
            <path d="M979 719h6v244h-6z" fill="#917f74" />
            <path d="M985 717l64 24v242h-64z" fill="#181816" />
            <path d="M988 715l61 23v7l-61-23z" fill="#45463e" />
            <path d="M996 727l47 16v224l-47-17z" fill="url(#louver)" />
            <path d="M943 945l106 41h-106z" fill="#322d28" /><path d="M979 959l70 27-8 0-62-22z" fill="#a39184" stroke="#111" />
            <path d="M1091 698h58v290h-100v-250z" fill="#47484b" />
            <path d="M1049 738l42-32 55-8h6l-55 24-38 22z" fill="#3f4039" stroke="#000" />
            <path d="M1060 752l30-18v190l-30-10z" fill="#989c9f" /><path d="M1066 760l20 80v60M1070 758l18 78-4 60" fill="none" stroke="#333" />
            <path d="M1090 712v250M1096 716v230M1103 718v240M1139 700v250M1143 699v250M1149 698v230" stroke="#0c0c0c" stroke-width="2" />
            <path d="M1060 975l85-46 190 58h-275z" fill="#c5c7c8" /><path d="M1066 972l84-38" stroke="#20c5c9" />

            <path d="M1249 698l204 77 39-22v-55z" fill="#f7f8f8" />
            <path d="M1295 714l30-16" stroke="#20d5dc" />
            <path d="M1492 698h8v52l-8 4z" fill="#777" stroke="#000" /><path d="M1500 698h36v40l-36 13z" fill="#252525" /><path d="M1500 704l36 14" stroke="#000" stroke-width="2" />
            <path d="M1167 698h30l270 102-15 8z" fill="#e2df4c" stroke="#111" />
            <path d="M1165 699l286 110" stroke="#fff" stroke-width="2" stroke-dasharray="1 2" />
            <path d="M1196 698h53l287 108v28z" fill="#f4a272" stroke="#111" />
            <path d="M1536 737l-84 38 28 12 56-25z" fill="#f4a272" stroke="#111" />
            <path d="M1480 787l56-25v45z" fill="#dde1e2" /><path d="M1511 753l25-9v16l-15 0z" fill="#fcb56b" />
            <path d="M1452 807l13-6 25 19-103 53-37-15z" fill="#e2df4c" stroke="#111" />
            <path d="M1356 856l102-50 24-10 20 8-117 60z" fill="#f4a272" />
            <path d="M1356 856l102-50M1385 864l108-57M1372 861l130-66" stroke="#111" />
            <path d="M1346 857l41 17 103-54" fill="none" stroke="#fff" stroke-width="2" stroke-dasharray="1 2" />
            <path d="M1490 814l46 18v8l-46-18z" fill="#e2df4c" stroke="#111" />
            <path d="M1238 713l26-11M1298 738l28-13M1325 750l25-14M1365 764l28-14M1450 796l50-22M1268 725l20-10M1209 702l-20 6" stroke="#111" />
            <path d="M1399 870l91-48v82z" fill="#e6ecee" /><path d="M1490 822l46 18v86l-46-22z" fill="#54585a" stroke="#111" />

            <path d="M1169 725l198 73v105l-60 80h-80l-58-43z" fill="#d0b3b5" />
            <path d="M1170 725l12 4v214l-12-3z" fill="#e4787a" />
            <path d="M1181 729l28 10v220l-28-12z" fill="#b80d0d" />
            <path d="M1186 731v214M1193 734v214M1200 736v214" stroke="#ff1c1c" stroke-width="2.500" />
            <path d="M1316 780l11 4v199h-11z" fill="#d80808" /><path d="M1320 782v200" stroke="#7d0000" />
            <path d="M1169 725l198 73v56M1169.500 725v215" fill="none" stroke="#111" stroke-width="1.300" />
            <path d="M1200 738l120 142M1206 738l116 138M1252 784v190M1210 920l110-52" fill="none" stroke="#e01010" />
            <path d="M1210 755l20-12M1210 790l50-24M1250 835l60-30M1280 762l-10 10 30 14M1290 790l76 24M1210 868l130 50M1210 906l60 30M1240 900l90-50M1300 900l20 20 20-6" fill="none" stroke="#3a0c0c" />
            <path d={glRed} stroke="#e01414" />
            <path d="M1180 936l165 60h-165z" fill="#cc8752" /><path d="M1208 944l125 48" stroke="#c20808" stroke-width="6" />
            <path d="M1130 772l63 24v112l-63-24zM1205 800l63 24v115l-63-24zM1282 830l60 24v125l-60-24z" fill="#2b2f31" fill-opacity=".3" />

            <path d="M1346 860l40 15v108h-42z" fill="#322d28" stroke="#000" /><path d="M1386 874h5v109h-5z" fill="#917f74" />
            <path d={glDark} stroke="#1a1010" /><path d={glRed2} stroke="#c01414" /><path d={glLeft} stroke="#0c0c0c" /><path d={glLow} stroke="#151515" />
            <g stroke="#121212" stroke-width="4">{#each balusters as x}<path d="M{x} {868 + (x - 1049) * 0.37}V983" />{/each}</g>
            <path d="M1049 738h8v245h-8zM1118 765h13v218h-13zM1193 794h13v189h-13zM1268 822h14v161h-14zM1340 850h6v133h-6z" fill="#171715" />
            <path d="M1052 742v240M1122 768v215M1127 768v215M1197 797v186M1202 797v186M1273 826v157M1278 826v157" stroke="#44443e" />
            <path d="M1049 868l297 113v-14l-297-113z" fill="#161614" /><path d="M1049 860l297 113" stroke="#4a4b43" />
            <path d="M1049 738l301 115-4 16-297-115z" fill="#191917" /><path d="M1049 736l301 116v6l-301-114z" fill="#45473d" stroke="#000" />

            <path d="M1391 868l145 56v59h-145z" fill="#181816" /><path d="M1392 866l144 55v8l-144-54z" fill="#45473d" stroke="#000" />
            <path d="M1403 884l53 20v79h-53z" fill="#abb1b4" /><path d="M1472 911l19 8v64h-19z" fill="#a9aeb0" /><path d="M1491 919l35 13v51h-35z" fill="#4c4c50" />
            <path d={glRight} stroke="#222" />
          </svg>
        </div>
        <div class="vscroll">{@render icon('caretGray', 14)}</div>
      </div>
      <div class="viewbar">
        <span>1 : 500</span>
        {#each viewIcons as n}<button class:boxed={n === 'glasses'} aria-label={n}>{@render icon(n, 17)}</button>{/each}
        <svg width="16" height="12" viewBox="0 0 16 12"><path d="M11 1L6 6l5 5" fill="none" stroke="#999" stroke-width="2" /></svg>
        <div class="hscroll"><i></i><svg width="10" height="12" viewBox="0 0 10 12"><path d="M2 1l5 5-5 5" fill="none" stroke="#999" stroke-width="2" /></svg></div>
        <svg class="grip" width="18" height="14" viewBox="0 0 18 14"><path d="M12 3h2v2h-2zM12 8h2v2h-2zM7 8h2v2H7z" fill="#888" /></svg>
      </div>
    </section>

    <aside class="props">
      <h2>Свойства <svg width="9" height="9" viewBox="0 0 9 9"><path d="M1 1l7 7M8 1L1 8" stroke="#666" stroke-width="1.500" /></svg></h2>
      <div class="typebox">
        <div class="thumb"></div>
        <p>ZH_Дверь_ГОСТ_30674_Блок_Оконные_Из_Пол<br />ивинилхлоридных_Профилей_Новое<br />Б-1 БП А1 2380 х 2570 Дп Вн Л<br />4М1_14_4М1_14_И4 ут. кв.</p>
        <b class="tri"></b>
      </div>
      <div class="typerow">
        <label class="inst"><select aria-label="Категория"><option>Окна (1)</option></select>{@render icon('caretGray', 13)}</label>
        <button>{@render icon('type', 17)}Изменить тип</button>
      </div>
      <div class="tablewrap">
        <div class="tclip">
          <table>
            <colgroup><col class="c1" /><col class="c2" /><col class="c3" /></colgroup>
            <tbody>
              {#each props as [a, b, f]}
                {#if a === '#'}
                  <tr class="head"><th colspan="2">{b}</th><td><svg width="8" height="10" viewBox="0 0 8 10"><path d="M1 4l3-3 3 3M1 9l3-3 3 3" fill="none" stroke="#222" stroke-width="1.500" /></svg></td></tr>
                {:else}
                  <tr class:gray={f === 'g'}><td class="name">{a}</td><td class="val" class:edit={f === 'edit'}>{b}</td><td>{#if f === 'b'}<button aria-label="Связать параметр"></button>{/if}</td></tr>
                {/if}
              {/each}
            </tbody>
          </table>
        </div>
        <div class="vscroll"><svg width="12" height="8" viewBox="0 0 12 8"><path d="M2 6l4-4 4 4" fill="none" stroke="#999" stroke-width="2" /></svg><i></i>{@render icon('caretGray', 14)}</div>
      </div>
      <div class="pfoot">
        <button class="on" aria-label="Сортировка">{@render icon('sort')}</button>
        <button class="az" aria-label="По возрастанию"><span><b>A</b>Z</span>{@render icon('down', 14)}</button>
        <button class="az za" aria-label="По убыванию"><span>Z<b>A</b></span>{@render icon('down', 14)}</button>
        <button class="apply" disabled>Применить</button>
      </div>
    </aside>
  </main>

  <footer class="status">
    <span class="hint">Стены : Базовая стена : ZH_ОТД_ФСД_180мм_плт_мнрлвтн_гст_9573_(р=130кг/м.кб)_100мм_штктрк_прст_цмнтн-псчн_29мм_шпклвк_гпсв_0м</span>
    {@render icon('work')}
    <div class="mid">{@render icon('caretGray', 12)}<span class="req">{@render icon('editreq')}:0</span>{@render icon('dlist')}{@render icon('dlist2')}<span class="model">Главная модель</span>{@render icon('caretGray', 12)}</div>
    <div class="selicons">{#each ['s1', 's2', 's3', 's4', 's5', 's6', 'filter'] as n}{@render icon(n)}{/each}<span>:1</span></div>
  </footer>

  <div class="dialog" role="dialog" aria-label="Простановка перемычек">
    <div class="dtitle">{@render icon('revit', 16, 22)}<span>Простановка перемычек</span>
      <svg width="110" height="14" viewBox="0 0 110 14"><path d="M3 8.500h10M48.500 2.500h9v10h-9zM94 3l9 9M103 3l-9 9" fill="none" stroke="#888" /></svg>
    </div>
    <div class="dbody">
      <div class="otree">
        <div class="olist">
          <div class="cutline"><span>ZННСЩ_КЛД_380_крпч_крмчск_380_</span></div>
          {#each openings as [w, s, items], i}
            <fieldset>
              <legend><b></b><em>Ширина проема {w} мм</em><em>Опирание {s}</em></legend>
              {#each items as it}
                <label><input type="radio" name="opening" checked={i === 8} />ZННСЩ_КЛД_{it}</label>
              {/each}
            </fieldset>
          {/each}
        </div>
        <div class="oscroll"><svg width="10" height="7" viewBox="0 0 10 7"><path d="M1 6l4-4 4 4" fill="none" stroke="#888" /></svg><i></i></div>
      </div>
      <div class="filters">
        <h3>Фильтры</h3>
        <label><input type="radio" name="brick" checked />Кирпич 65 мм</label>
        <label><input type="radio" name="brick" />Кирпич 88 мм</label>
        <label><input type="radio" name="brick" />Перегородки</label>
        <h3 class="sp">Материал перемычки</h3>
        <label><input type="radio" name="mat" />Металлическая</label>
        <label><input type="radio" name="mat" checked />Железобетонная</label>
        <h3 class="tight">Опирание</h3>
        <label class="chk"><input type="checkbox" />Не учитывать опирание</label>
      </div>
      <div class="families">
        <h3><label for="fam">Семейства</label></h3>
        <div class="combo"><select id="fam"><option>01_1_ZH_СК_ЖБ_Перемычки</option></select><svg width="7" height="6" viewBox="0 0 7 6"><path d="M1 1l2.500 3L6 1" fill="none" stroke="#444" /></svg></div>
        <h3 class="types">Типы</h3>
        <ul><li>Тестовый вариант</li></ul>
        <label class="chk"><input type="checkbox" />Заменять существующие</label>
        <label class="chk"><input type="checkbox" />Автоматическая простановка</label>
      </div>
    </div>
    <div class="dfoot">
      <label class="chk"><input type="checkbox" />Разбивать перемычки выше и ниже отм. 0,000</label>
      <button>Нумерация</button><button>Нумерация влож. эл-ов</button><button>Разрезы</button><button>Марки</button><button>Разрезы на листы</button>
      <button class="go">Выполнить</button>
    </div>
  </div>

  <svg class="notes" aria-hidden="true">
    <defs><marker id="tip" viewBox="0 0 10 10" refX="9" refY="5" markerWidth="21" markerHeight="19" markerUnits="userSpaceOnUse" orient="auto" preserveAspectRatio="none"><path d="M0 0l10 5-10 5z" fill="#e81c1c" /></marker></defs>
    <g fill="none" stroke="#e81c1c" stroke-width="4">
      <rect x="778" y="135" width="193" height="256" /><rect x="995" y="131" width="612" height="63" />
      <rect x="989" y="212" width="182" height="50" /><rect x="209" y="598" width="490" height="62" />
      <rect x="1047" y="716" width="383" height="263" />
      <g marker-end="url(#tip)"><path d="M1008 782L714 615" /><path d="M655 582L770 279" /><path d="M948 200L1005 157" /><path d="M1062 187L1090 211" /><path d="M1136 259L1531 681" /></g>
    </g>
  </svg>
</div>

<style>
  :global(body) { margin: 0; background: #f0f0f0; }
  .app { position: relative; display: flex; flex-direction: column; height: 100vh; overflow: hidden; font: 11px/16px 'Open Sans', 'Noto Sans', sans-serif; color: #333; }
  .app :global(svg) { flex: none; display: block; }
  button { font: inherit; color: inherit; border: 0; background: none; padding: 0; display: flex; align-items: center; justify-content: center; }
  a { color: inherit; text-decoration: none; }
  h1, h2, h3, p, ul, fieldset { margin: 0; padding: 0; border: 0; font-size: 11px; font-weight: 400; list-style: none; }
  .tri { display: inline-block; border: 4px solid transparent; border-top: 5px solid #444; border-bottom: 0; }

  .top { display: flex; height: 27px; background: #d9d9d9; flex: none; white-space: nowrap; }
  .logo { width: 22px; height: 22px; }
  .qat { display: flex; height: 21px; }
  .qat button.on { background: #d5e8f2; outline: 1px solid #83c1df; outline-offset: -1px; }
  .sep { background: linear-gradient(#aaa, #aaa) center / 1px 100% no-repeat; }
  .top h1 { flex: 1; text-align: center; }
  .account { display: flex; align-items: center; gap: 8px; height: 21px; margin-right: 42px; color: #222; }
  .account a { margin: 0 -4px 0 -2px; }
  .account i { width: 1px; height: 18px; background: #aaa; }
  .winbtns { display: flex; align-items: center; height: 20px; gap: 11px; padding-right: 3px; }
  .winbtns button:first-child { margin-right: 8px; }

  .tabs { display: flex; height: 20px; background: #d9d9d9; flex: none; white-space: nowrap; }
  .file { width: 45px; background: #2a7ab0; color: #fff; text-align: center; line-height: 20px; }
  .tablist { flex: 1; display: flex; justify-content: space-between; padding: 0 58px 0 12px; line-height: 20px; }
  .ff { align-self: center; }

  .ribbon { display: flex; flex: none; height: 95px; background: #f5f5f5; overflow: hidden; white-space: nowrap; }
  .g { flex: none; box-sizing: border-box; border-right: 2px solid #e9eee3; padding-top: 3px; }
  .row { display: flex; }
  .g footer { text-align: center; line-height: 20px; }
  .ribbon .hl { background: #dcecf5; outline: 1px solid #83c1df; outline-offset: -1px; }
  .tall, .big { flex-direction: column; }
  .tall { width: 59px; height: 72px; justify-content: flex-start; padding-top: 3px; margin: 0 1px; }
  .tall span { margin-top: 1px; }
  .tall.act { width: 82px; height: 92px; }
  .g1 { width: 64px; } .g2 { width: 62px; text-align: center; } .g3 { width: 100px; } .g4 { width: 171px; } .g5 { width: 86px; }
  .g6 { width: 238px; } .g7 { width: 67px; } .g8 { width: 64px; } .g9 { width: 86px; border-right-width: 5px; } .g10 { width: 91px; }
  .g11 { width: 217px; } .g12 { width: 96px; } .g13 { width: 89px; border: 0; }
  .g2 button { width: 38px; height: 35px; margin: 0 auto 1px; }
  .g1 footer, .g2 footer, .g3 footer { height: 20px; }
  .g3 footer { text-align: left; padding-left: 10px; }
  .big { height: 92px; justify-content: flex-start; padding-top: 2px; margin: 0 auto; line-height: 14px; text-align: center; }
  .big span { margin-top: 5px; }
  .big.off { color: #b5b5b5; height: 72px; padding-left: 8px; }
  .col { display: flex; flex-direction: column; gap: 7px; padding: 3px 4px; }
  .g3 .col { padding-right: 6px; }
  .wide { width: 106px; gap: 5px; padding: 2px 4px 2px 6px; box-sizing: border-box; }
  .wide button { justify-content: flex-start; gap: 5px; height: 18px; }
  .wide button.pressed { background: #e0e0e0; }
  .carets { padding: 4px 0; gap: 9px; }
  .carets span { height: 14px; }
  .quad { display: grid; grid-template-columns: repeat(4, 32px); gap: 3px 7px; padding: 0 6px 0 8px; height: 74px; }
  .g6 .col { padding: 2px 4px; }
  .g7 .col:first-child { padding-left: 8px; }
  .duo { display: grid; grid-template-columns: auto auto; align-content: start; justify-content: center; align-items: center; gap: 4px 6px; }
  .green { box-shadow: inset 0 2px #86b440; }
  .rest { flex: 1; background: #e8eee2; }
  .g11 .big { min-width: 66px; }

  .options { flex: none; height: 29px; box-sizing: border-box; border-top: 1px solid #d3d8cf; border-bottom: 2px solid #bbb; background: #e8eee2; padding-left: 6px; line-height: 27px; }
  .work { flex: 1; min-height: 0; display: flex; }
  .work h2 { height: 17px; flex: none; background: #d6d6d6; line-height: 17px; overflow: hidden; white-space: nowrap; }

  .browser { width: 382px; flex: none; display: flex; flex-direction: column; background: #fff; border-right: 4px solid #c9c9c9; box-sizing: border-box; position: relative; }
  .browser::after { content: ''; position: absolute; left: 0; bottom: 0; width: 24px; height: 140px; background: radial-gradient(ellipse at 0 100%, rgba(0, 0, 0, .6), rgba(0, 0, 0, 0) 70%); }
  .search { display: flex; align-items: center; gap: 8px; height: 24px; border: 1px solid #ddd; margin: 8px 20px 8px 7px; padding-left: 8px; }
  .search input { border: 0; outline: 0; font: inherit; flex: 1; }
  .search input::placeholder { color: #999; }
  .treewrap { flex: 1; min-height: 0; display: flex; overflow: hidden; }
  .ptree { flex: 1; min-width: 0; background: repeating-linear-gradient(#bbb 0 4px, transparent 4px 6px) 7px 0 / 1px 100% no-repeat, repeating-linear-gradient(#bbb 0 4px, transparent 4px 6px) 23px 0 / 1px 100% no-repeat; }
  .ptree li { display: flex; align-items: center; height: 20px; padding-left: 24px; overflow: hidden; white-space: nowrap; box-sizing: border-box; }
  .ptree li.deep { padding-left: 39px; background: repeating-linear-gradient(#bbb 0 4px, transparent 4px 5px) 39px 0 / 1px 100% no-repeat; }
  .ptree li.end { background-size: 1px 50%; }
  .ptree li.sel { background: rgba(0, 0, 0, .05); outline: 1px solid #ddd; outline-offset: -1px; }
  .dash { width: 24px; height: 1px; flex: none; background: repeating-linear-gradient(90deg, #bbb 0 4px, transparent 4px 6px); }
  .dash.short { width: 9px; }
  .ptree b { width: 5px; display: flex; flex: none; }
  .dash.short + b { width: 20px; padding-left: 3px; box-sizing: border-box; }
  .deep .dash { margin-right: 6px; }
  .deep span { margin-left: 4px; }
  .vscroll { width: 17px; flex: none; background: #e8e8e8; display: flex; flex-direction: column; align-items: center; justify-content: flex-end; padding-bottom: 3px; box-sizing: border-box; }

  .view { flex: 1; min-width: 0; display: flex; flex-direction: column; background: #f5f5f5; margin-left: 4px; }
  .stage { flex: 1; min-height: 0; display: flex; }
  .canvas { flex: 1; min-width: 0; border: 4px solid #00f0ff; overflow: hidden; }
  .canvas svg { width: 100%; height: 100%; }
  .viewbar { display: flex; align-items: center; height: 19px; padding-left: 24px; flex: none; }
  .viewbar > span { width: 54px; }
  .viewbar button { width: 26px; height: 19px; }
  .viewbar .boxed { outline: 2px solid #3c8fd0; outline-offset: -2px; width: 20px; margin: 0 3px; }
  .hscroll { flex: 1; display: flex; align-items: center; justify-content: flex-end; height: 17px; background: #e8e8e8; }
  .hscroll i { width: 17px; height: 5px; border-radius: 3px; background: #ccc; margin-right: 336px; }

  .props { width: 357px; flex: none; display: flex; flex-direction: column; background: #f4f4f4; border-left: 4px solid #c9c9c9; margin-left: 1px; box-sizing: border-box; }
  .props h2 { display: flex; justify-content: space-between; align-items: center; padding-left: 5px; }
  .typebox { display: flex; height: 68px; border-top: 1px solid #aaa; border-bottom: 1px solid #bbb; align-items: center; box-sizing: content-box; }
  .thumb { width: 67px; height: 64px; background: #fff; border: 1px solid #bbb; margin-right: 5px; flex: none; }
  .typebox p { flex: 1; white-space: nowrap; }
  .typebox .tri { border-top-color: #888; margin-right: 5px; }
  .typerow { display: flex; align-items: center; height: 28px; gap: 5px; margin-bottom: 4px; }
  .inst { display: flex; align-items: center; width: 246px; height: 26px; border-bottom: 2px solid #c8c8c8; flex: none; }
  .inst select { flex: 1; appearance: none; border: 0; background: none; font: inherit; color: #1f5f99; padding: 0 4px; }
  .typerow button { gap: 5px; white-space: nowrap; }
  .tablewrap { flex: 1; min-height: 0; display: flex; }
  .tclip { flex: 1; overflow: hidden; background: #fff; }
  table { width: 100%; table-layout: fixed; border-collapse: collapse; }
  .c2 { width: 163px; } .c3 { width: 13px; }
  tr { height: 18px; }
  td, th { height: 17px; padding: 0; line-height: 17px; border-bottom: 1px dotted #ccc; border-right: 1px dotted #ccc; white-space: nowrap; overflow: hidden; text-align: left; font-weight: 400; }
  .head th { padding-left: 2px; } .head th, .head td { background: #f2f2f2; border-color: #f2f2f2; overflow: visible; }
  .name { padding-left: 8px; } .val { padding-left: 3px; }
  .val.edit { outline: 1px solid #000; outline-offset: -1px; background: #fff; }
  .gray { color: #999; }
  td button { width: 9px; height: 15px; border: 1px solid #bbb; background: #f4f4f4; margin: 0 0 0 2px; box-sizing: border-box; }
  .tablewrap .vscroll { width: 14px; padding-top: 5px; }
  .tablewrap .vscroll i { width: 5px; height: 188px; border-radius: 3px; background: #ccc; margin: 6px 0 auto; }
  .pfoot { display: flex; align-items: center; height: 25px; gap: 5px; padding: 0 1px 0 2px; background: #ededed; flex: none; }
  .pfoot .on { width: 20px; height: 22px; background: #90cbea; outline: 1px solid #5aa8d3; }
  .az { width: 21px; height: 22px; background: #f4f4f4; font-size: 9px; line-height: 10px; }
  .az span { display: flex; flex-direction: column; width: 7px; } .az b { color: #2a8ad0; }
  .pfoot .apply { margin-left: auto; border: 1px solid #ccc; height: 18px; padding: 0 4px; color: #999; background: #f4f4f4; }

  .status { display: flex; align-items: center; height: 23px; flex: none; background: #f3f3f3; white-space: nowrap; gap: 6px; }
  .mid { display: flex; align-items: center; gap: 10px; margin-left: auto; color: #777; }
  .req { display: flex; margin: 0 14px 0 0; }
  .model { width: 180px; color: #999; }
  .selicons { display: flex; align-items: center; gap: 10px; margin: 0 68px 0 329px; } .selicons span { margin-left: -8px; }

  .dialog { position: absolute; left: 187px; right: 304px; top: 110px; background: #fff; border: 1px solid #bdbdbd; border-radius: 8px; overflow: clip; color: #000; box-shadow: 0 16px 36px rgba(0, 0, 0, .34), 0 2px 10px rgba(0, 0, 0, .2); box-sizing: border-box; }
  .dtitle { display: flex; align-items: center; gap: 5px; height: 30px; background: #f3f3f3; color: #8d8d8d; padding: 0 10px 0 8px; }
  .dtitle span { flex: 1; }
  .dbody { display: flex; height: 517px; margin: 5px 4px 0 4px; }
  .otree { width: 600px; border: 1px solid #828790; display: flex; }
  .olist { flex: 1; overflow: hidden; padding-left: 40px; }
  .cutline { height: 6px; display: flex; align-items: flex-end; padding-left: 41px; overflow: hidden; }
  .cutline span { line-height: 16px; margin-bottom: 3px; }
  .olist fieldset { width: 300px; border-top: 1px solid #222; min-width: 0; }
  .olist legend { padding: 0; position: relative; float: left; width: 100%; }
  .olist em { display: block; font-size: 12px; }
  .olist legend b { position: absolute; left: -14px; top: 13px; border: 4px solid transparent; border-right-color: #333; border-bottom-color: #333; border-width: 3px 4px; }
  .olist label { clear: both; padding: 0 0 1px 23px; height: 20px; }
  label { display: flex; align-items: center; }
  .oscroll { width: 17px; background: #f0f0f0; display: flex; flex-direction: column; align-items: center; padding-top: 5px; }
  .oscroll i { width: 100%; height: 146px; margin-top: 60px; background: #cdcdcd; }
  .dialog input { appearance: none; margin: 0 6px 0 0; width: 12px; height: 12px; border: 1px solid #666; border-radius: 50%; background: #fff; box-sizing: border-box; flex: none; }
  .dialog input:checked { background: radial-gradient(#222 0 3px, #fff 4px); }
  .dialog .chk input { width: 14px; height: 14px; border-radius: 0; margin-right: 5px; }
  .filters { width: 187px; border: 1px solid #000; border-top-width: 3px; margin-left: 10px; padding-left: 1px; box-sizing: content-box; }
  .dialog h3 { font-weight: 700; line-height: 18px; }
  .filters label { height: 20px; }
  .filters .sp { line-height: 22px; } .filters .tight { line-height: 12px; }
  .filters .chk { margin-top: 9px; }
  .families { flex: 1; margin-left: 10px; display: flex; flex-direction: column; }
  .combo { display: flex; align-items: center; height: 22px; background: linear-gradient(#f0f0f0, #e3e3e3); border: 1px solid #acacac; padding: 0 6px 0 0; margin-top: 4px; box-sizing: border-box; }
  .combo select { appearance: none; flex: 1; font: inherit; border: 0; background: none; padding: 0 5px; }
  .families .types { margin-top: 5px; line-height: 18px; }
  .families ul { height: 413px; border: 1px solid #abadb3; padding: 4px 6px; box-sizing: border-box; margin: 4px 0 5px; flex: none; }
  .families .chk { height: 15px; flex: none; }
  .dfoot { display: flex; align-items: center; gap: 5px; height: 35px; padding: 0 4px 0 5px; white-space: nowrap; }
  .dfoot .chk { margin: 0 6px 2px 0; }
  .dfoot button { height: 20px; border: 1px solid #707070; background: #ddd; padding: 0 2px; margin-top: 5px; box-sizing: border-box; }
  .dfoot .go { margin-left: auto; }

  .notes { position: absolute; inset: 0; width: 100%; height: 100%; pointer-events: none; }
</style>
